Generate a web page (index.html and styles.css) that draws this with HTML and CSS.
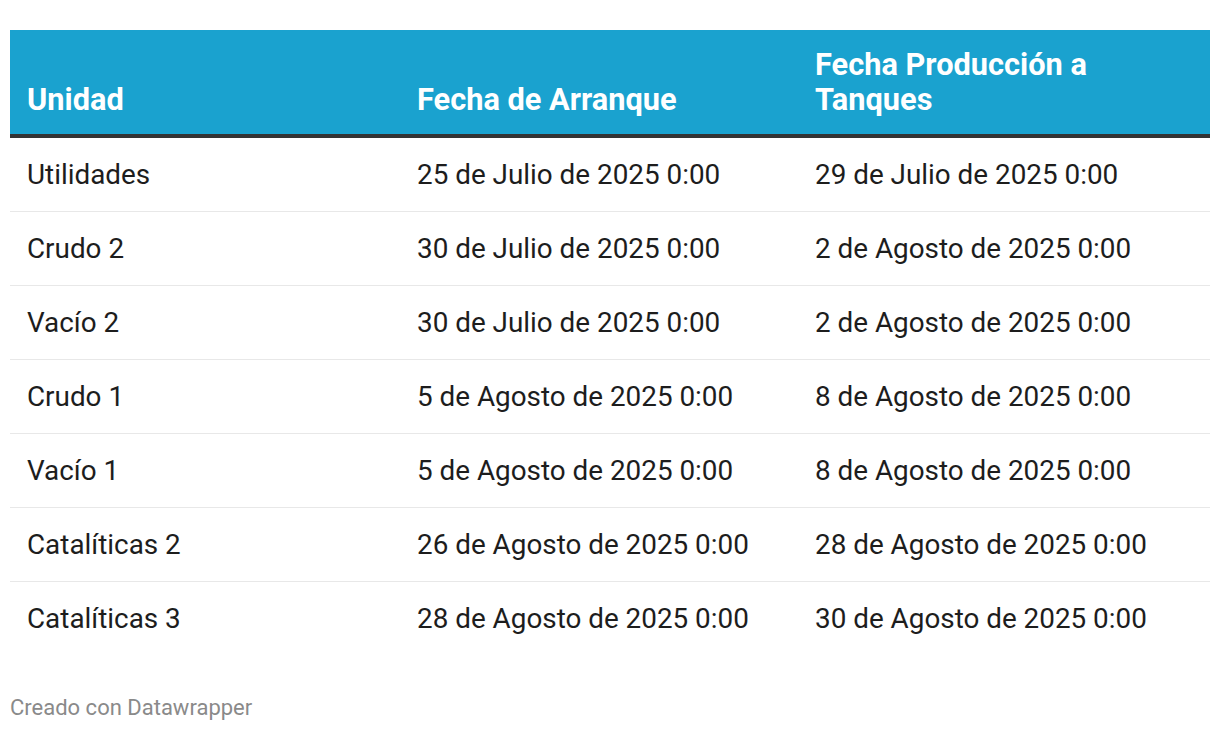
FILE: index.html
```html
<!DOCTYPE html>
<html lang="es">
<head>
<meta charset="utf-8">
<link rel="stylesheet" href="styles.css">
</head>
<body>
<div class="wrap">
  <table class="tbl">
    <colgroup>
      <col class="c1"><col class="c2"><col class="c3">
    </colgroup>
    <thead>
      <tr>
        <th>Unidad</th>
        <th>Fecha de Arranque</th>
        <th>Fecha Producción a Tanques</th>
      </tr>
    </thead>
    <tbody>
      <tr><td>Utilidades</td><td>25 de Julio de 2025 0:00</td><td>29 de Julio de 2025 0:00</td></tr>
      <tr><td>Crudo 2</td><td>30 de Julio de 2025 0:00</td><td>2 de Agosto de 2025 0:00</td></tr>
      <tr><td>Vacío 2</td><td>30 de Julio de 2025 0:00</td><td>2 de Agosto de 2025 0:00</td></tr>
      <tr><td>Crudo 1</td><td>5 de Agosto de 2025 0:00</td><td>8 de Agosto de 2025 0:00</td></tr>
      <tr><td>Vacío 1</td><td>5 de Agosto de 2025 0:00</td><td>8 de Agosto de 2025 0:00</td></tr>
      <tr><td>Catalíticas 2</td><td>26 de Agosto de 2025 0:00</td><td>28 de Agosto de 2025 0:00</td></tr>
      <tr><td>Catalíticas 3</td><td>28 de Agosto de 2025 0:00</td><td>30 de Agosto de 2025 0:00</td></tr>
    </tbody>
  </table>
  <div class="footer">Creado con Datawrapper</div>
</div>
</body>
</html>
```
FILE: styles.css
```css
html, body {
  margin: 0;
  padding: 0;
  background: #fff;
}
body {
  font-family: Roboto, "Liberation Sans", sans-serif;
  color: #1d1d1d;
}
.wrap {
  padding: 30px 10px 0 10px;
}
.tbl {
  width: 1200px;
  border-collapse: collapse;
  table-layout: fixed;
}
.c1 { width: 390px; }
.c2 { width: 398px; }
.c3 { width: 412px; }
.tbl th {
  background: #1aa2cf;
  color: #fff;
  font-weight: 700;
  font-size: 30.75px;
  line-height: 35px;
  text-align: left;
  vertical-align: bottom;
  padding: 17px 40px 17px 17px;
  border-bottom: 4px solid #333;
}
.tbl td {
  font-size: 27.85px;
  line-height: 30px;
  padding: 22px 17px 21px 17px;
  border-bottom: 1px solid #e8e8e8;
  vertical-align: middle;
  white-space: nowrap;
}
.tbl tbody tr:last-child td {
  border-bottom: none;
}
.footer {
  margin-top: 40px;
  font-size: 22px;
  color: #8a8a8a;
  line-height: 26px;
}
```
